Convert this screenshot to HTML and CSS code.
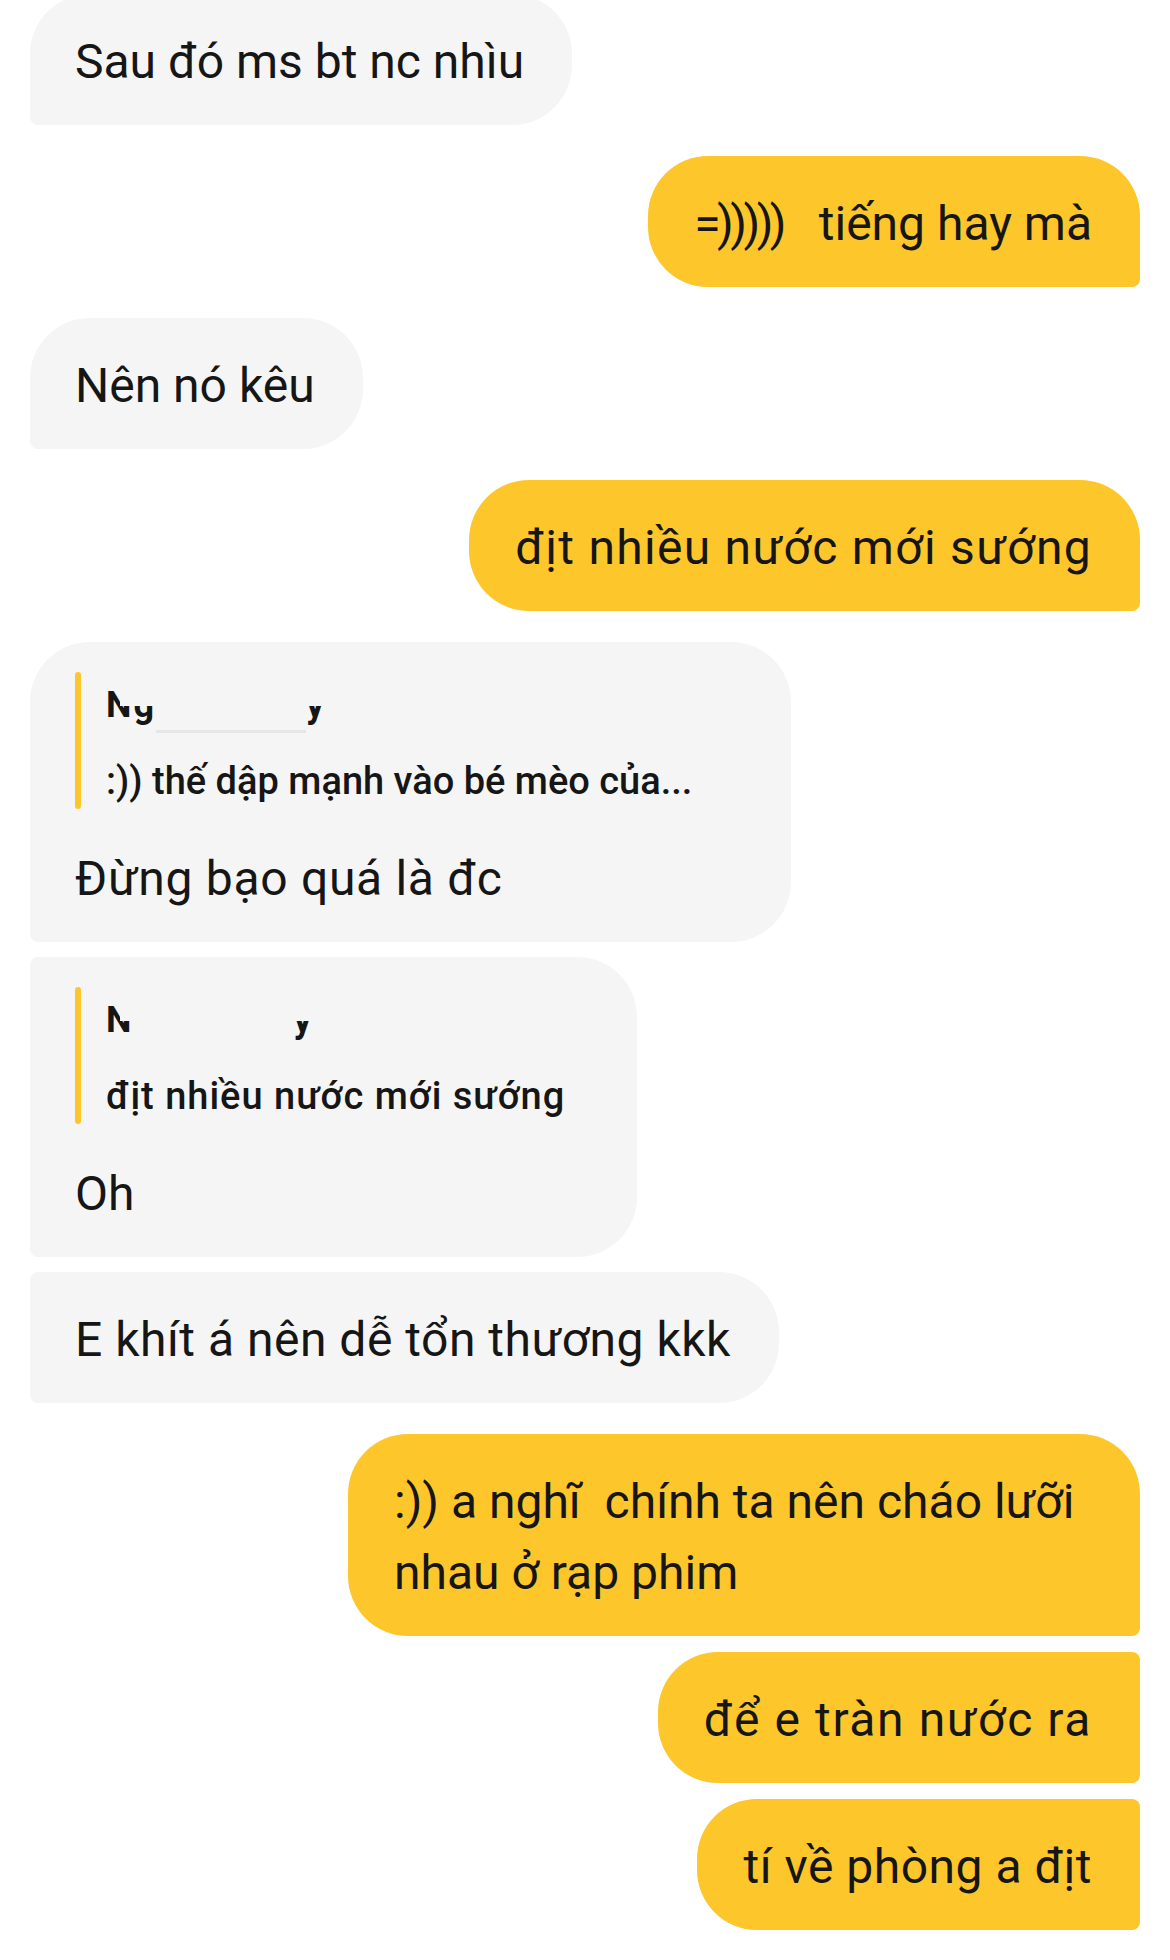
FILE: index.html
```html
<!DOCTYPE html>
<html lang="vi">
<head>
<meta charset="utf-8">
<title>Chat</title>
<link rel="stylesheet" href="styles.css">
</head>
<body>
<div class="chat">
  <div class="msg in first-top">
    <div class="bubble in-single">Sau đó ms bt nc nhìu</div>
  </div>

  <div class="msg out group">
    <div class="bubble out-single"><span class="emote">=)))))</span>&nbsp;&nbsp; tiếng hay mà</div>
  </div>

  <div class="msg in group">
    <div class="bubble in-single">Nên nó kêu</div>
  </div>

  <div class="msg out group">
    <div class="bubble out-single ls-wide">địt nhiều nước mới sướng</div>
  </div>

  <div class="msg in group">
    <div class="bubble in-first quoted q-wide">
      <div class="quote">
        <div class="quote-bar"></div>
        <div class="quote-body">
          <div class="quote-name"><span class="redact">Ng<span class="gapw">uy</span>y</span></div>
          <div class="quote-text">:)) thế dập mạnh vào bé mèo của...</div>
        </div>
      </div>
      <div class="text ls-s">Đừng bạo quá là đc</div>
    </div>
  </div>

  <div class="msg in tight">
    <div class="bubble in-mid quoted">
      <div class="quote">
        <div class="quote-bar"></div>
        <div class="quote-body">
          <div class="quote-name"><span class="redact">N<span class="gapw2">gu</span>y</span></div>
          <div class="quote-text ls-q">địt nhiều nước mới sướng</div>
        </div>
      </div>
      <div class="text">Oh</div>
    </div>
  </div>

  <div class="msg in tight">
    <div class="bubble in-mid ls-xs">E khít á nên dễ tổn thương kkk</div>
  </div>

  <div class="msg out group">
    <div class="bubble out-first">:)) a nghĩ&nbsp; chính ta nên cháo lưỡi nhau ở rạp phim</div>
  </div>

  <div class="msg out">
    <div class="bubble out-mid ls-xl">để e tràn nước ra</div>
  </div>

  <div class="msg out">
    <div class="bubble out-mid ls-t">tí về phòng a địt</div>
  </div>
</div>
</body>
</html>
```

FILE: styles.css
```css
* { box-sizing: border-box; }

html, body {
  margin: 0;
  padding: 0;
  background: #ffffff;
}

body {
  font-family: Roboto, "Noto Sans", "Liberation Sans", sans-serif;
  color: #161616;
  width: 1170px;
  height: 1960px;
  overflow: hidden;
}

.chat {
  display: flex;
  flex-direction: column;
  padding: 0 30px;
}

.msg {
  display: flex;
  margin-top: 16px;
}

.msg.tight { margin-top: 15px; }
.msg.group { margin-top: 31px; }
.msg.first-top { margin-top: -6px; }

.msg.in { justify-content: flex-start; }
.msg.out { justify-content: flex-end; }

.bubble {
  font-size: 48px;
  line-height: 71px;
  padding: 32px 48px 28px 45px;
  max-width: 792px;
}

.bubble.in-single,
.bubble.in-first,
.bubble.in-mid {
  background: #f5f5f5;
}

.bubble.in-single { border-radius: 60px 60px 60px 8px; }
.bubble.in-first  { border-radius: 60px 60px 60px 8px; }
.bubble.in-mid    { border-radius: 8px 60px 60px 8px; }

.bubble.out-single,
.bubble.out-first,
.bubble.out-mid {
  background: #fdc62b;
  padding: 32px 48px 28px 46px;
}

.bubble.out-single { border-radius: 60px 60px 8px 60px; }
.bubble.out-first  { border-radius: 60px 60px 8px 60px; }
.bubble.out-mid    { border-radius: 60px 8px 8px 60px; }

.emote { letter-spacing: -3.5px; }

.ls-xs { letter-spacing: 0.5px; }
.ls-t  { letter-spacing: 0.5px; }
.ls-s  { letter-spacing: 0.7px; }
.ls-q  { letter-spacing: 1px; }
.ls-wide { letter-spacing: 1.3px; }
.ls-xl { letter-spacing: 1.6px; }

.bubble.quoted {
  padding-top: 30px;
  padding-right: 72px;
}

.bubble.quoted.q-wide {
  padding-right: 99px;
}

.quote {
  display: flex;
  margin-bottom: 34px;
}

.quote-bar {
  width: 6px;
  border-radius: 3px;
  background: #fdc62b;
  flex: none;
}

.quote-body {
  padding: 8px 0 3px 25px;
}

.quote-name {
  font-size: 36px;
  line-height: 50px;
  font-weight: 700;
  height: 50px;
}

.redact {
  position: relative;
  display: inline-block;
  letter-spacing: 2px;
}

.redact::after {
  content: "";
  position: absolute;
  left: 14px;
  right: 0;
  top: 6px;
  height: 20px;
  background: #f5f5f5;
}

.gapw {
  display: inline-block;
  width: 150px;
  color: transparent;
  border-bottom: 3px solid #e6e6e6;
}

.gapw2 {
  display: inline-block;
  width: 160px;
  color: transparent;
}

.quote-text {
  margin-top: 26px;
  font-size: 38px;
  line-height: 50px;
  font-weight: 500;
  white-space: nowrap;
}

.text {
  font-size: 48px;
  line-height: 71px;
}
```
